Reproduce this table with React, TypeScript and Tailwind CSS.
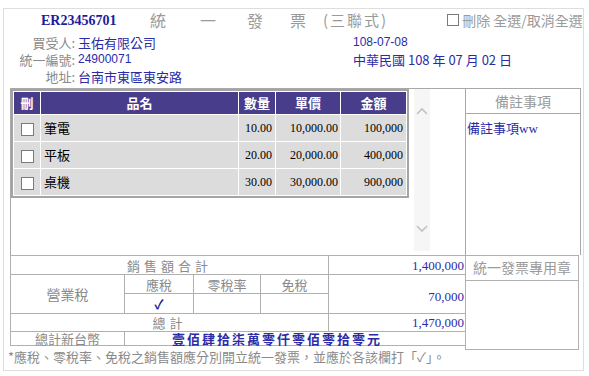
import React from "react";

const cjk = "font-['Noto_Sans_CJK_TC',sans-serif]";
const serif = "font-['Liberation_Serif','Noto_Sans_CJK_TC',serif]";
const sansNum = "font-['Liberation_Sans','Noto_Sans_CJK_TC',sans-serif]";

const items = [
  { name: "筆電", qty: "10.00", price: "10,000.00", amount: "100,000" },
  { name: "平板", qty: "20.00", price: "20,000.00", amount: "400,000" },
  { name: "桌機", qty: "30.00", price: "30,000.00", amount: "900,000" },
];

function Box({ className = "" }: { className?: string }) {
  return <span className={"inline-block bg-white border border-[#7a7a7a] " + className} />;
}

function Chevron({ up }: { up?: boolean }) {
  return (
    <svg width="12" height="8" viewBox="0 0 12 8" className="block">
      <polyline
        points={up ? "1,7 6,2 11,7" : "1,1 6,6 11,1"}
        fill="none"
        stroke="#c2c2c2"
        strokeWidth="1.6"
      />
    </svg>
  );
}

const cell = "border border-[#b0b0b0] p-0";

export default function App() {
  return (
    <div className={`w-[589px] h-[376px] bg-white overflow-hidden ${cjk}`}>
      <div className="ml-[3px] mt-[8px] w-[581px] h-[363px] border border-[#dedede]">
        {/* ── Title row ── */}
        <div className="flex items-center h-[25px] pb-[3px]">
          <span className={`ml-[37px] w-[109px] text-[14px] font-bold text-[#1c1c9c] ${serif}`}>ER23456701</span>
          <span className="w-[50px] text-[16px] text-[#9a9a9a]">統</span>
          <span className="w-[47px] text-[16px] text-[#9a9a9a]">一</span>
          <span className="w-[43px] text-[16px] text-[#9a9a9a]">發</span>
          <span className="w-[33px] text-[16px] text-[#9a9a9a]">票</span>
          <span className="text-[15px] text-[#9a9a9a] tracking-[2px]">(三聯式)</span>
          <Box className="ml-[59px] w-[12px] h-[12px]" />
          <span className="ml-[3px] text-[14px] text-[#9a9a9a] whitespace-nowrap">刪除 全選/取消全選</span>
        </div>

        {/* ── Buyer info ── */}
        <div className="flex text-[13px] leading-[17px]">
          <div className="w-[71px] text-right text-[#8a8a8a]">
            <div>買受人:</div>
            <div>統一編號:</div>
            <div>地址:</div>
          </div>
          <div className="ml-[3px] w-[275px] text-[#2b2ba8]">
            <div>玉佑有限公司</div>
            <div className={`text-[12px] ${sansNum}`}>24900071</div>
            <div>台南市東區東安路</div>
          </div>
          <div className="text-[#2b2ba8]">
            <div className={`text-[12px] ${sansNum}`}>108-07-08</div>
            <div>中華民國 108 年 07 月 02 日</div>
          </div>
        </div>

        {/* ── Items + notes ── */}
        <div className="flex ml-[6px] mt-[3px]">
          <div className="flex w-[455px] h-[167px] border-l border-t border-[#a8a8a8]">
            <table className="w-[398px] h-[108px] border-2 border-[#a4a4a4] border-separate border-spacing-px bg-white text-[13px] self-start">
              <thead>
                <tr className="h-[22px] bg-[#483d8b] text-white font-bold">
                  <th className="w-[26px] font-bold">刪</th>
                  <th className="w-[197px] font-bold">品名</th>
                  <th className="w-[36px] font-bold">數量</th>
                  <th className="w-[64px] font-bold">單價</th>
                  <th className="w-[65px] font-bold">金額</th>
                </tr>
              </thead>
              <tbody>
                {items.map((it) => (
                  <tr key={it.name} className="h-[26px] bg-[#dcdcdc] text-black">
                    <td className="text-center">
                      <Box className="w-[13px] h-[13px] align-middle" />
                    </td>
                    <td className="pl-[3px]">{it.name}</td>
                    <td className={`text-right pr-[3px] text-[12px] ${serif}`}>{it.qty}</td>
                    <td className={`text-right pr-[2px] text-[12px] ${serif}`}>{it.price}</td>
                    <td className={`text-right pr-[3px] text-[12px] ${serif}`}>{it.amount}</td>
                  </tr>
                ))}
              </tbody>
            </table>
            <div className="ml-[5px] w-[16px] h-[162px] bg-[#f6f6f6] flex flex-col items-center justify-between pt-[18px] pb-[18px]">
              <Chevron up />
              <Chevron />
            </div>
          </div>
          <div className="w-[116px] h-[167px] border-l border-t border-r border-[#a8a8a8]">
            <div className="h-[25px] border-b border-[#a8a8a8] text-center text-[14px] leading-[24px] text-[#9a9a9a]">
              備註事項
            </div>
            <div className="mt-[5px] pl-[1px] text-[13px] leading-[17px] text-[#2b2ba8]">
              備註事項<span className={serif}>ww</span>
            </div>
          </div>
        </div>

        {/* ── Totals ── */}
        <div className="flex ml-[6px]">
          <table className="w-[456px] border-collapse text-[13px] leading-[13px] text-[#8a8a8a] self-start">
            <tbody>
              <tr className="h-[19px]">
                <td colSpan={4} className={`${cell} text-center tracking-[4px]`}>銷售額合計</td>
                <td className={`${cell} text-right pr-[1px] text-[#2b2ba8] ${serif}`}>1,400,000</td>
              </tr>
              <tr className="h-[19px]">
                <td rowSpan={2} className={`${cell} w-[114px] text-center text-[14px]`}>營業稅</td>
                <td className={`${cell} w-[69px] text-center`}>應稅</td>
                <td className={`${cell} w-[67px] text-center`}>零稅率</td>
                <td className={`${cell} w-[68px] text-center`}>免稅</td>
                <td rowSpan={2} className={`${cell} text-right pr-[1px] pt-[4px] text-[#2b2ba8] ${serif}`}>70,000</td>
              </tr>
              <tr className="h-[20px]">
                <td className={`${cell} text-center font-bold text-[#1c1c9c]`}>✓</td>
                <td className={cell} />
                <td className={cell} />
              </tr>
              <tr className="h-[18px]">
                <td colSpan={4} className={`${cell} text-center tracking-[4px]`}>總計</td>
                <td className={`${cell} text-right pr-[1px] text-[#2b2ba8] ${serif}`}>1,470,000</td>
              </tr>
              <tr className="h-[13px]">
                <td className={`${cell} text-center`}>總計新台幣</td>
                <td colSpan={4} className={`${cell} pl-[47px] font-bold tracking-[2px] text-[#2b2ba8]`}>
                  壹佰肆拾柒萬零仟零佰零拾零元
                </td>
              </tr>
            </tbody>
          </table>
          <div className="w-[114px] -ml-px">
            <div className="h-[26px] border border-[#b0b0b0] text-center text-[14px] leading-[22px] text-[#9a9a9a]">
              統一發票專用章
            </div>
            <div className="h-[69px] border-l border-r border-b border-[#b0b0b0]" />
          </div>
        </div>

        {/* ── Footnote ── */}
        <div className="-mt-[1px] pl-[4px] text-[13px] leading-[16px] text-[#8a8a8a] whitespace-nowrap">
          *應稅、零稅率、免稅之銷售額應分別開立統一發票，並應於各該欄打「✓」。
        </div>
      </div>
    </div>
  );
}
